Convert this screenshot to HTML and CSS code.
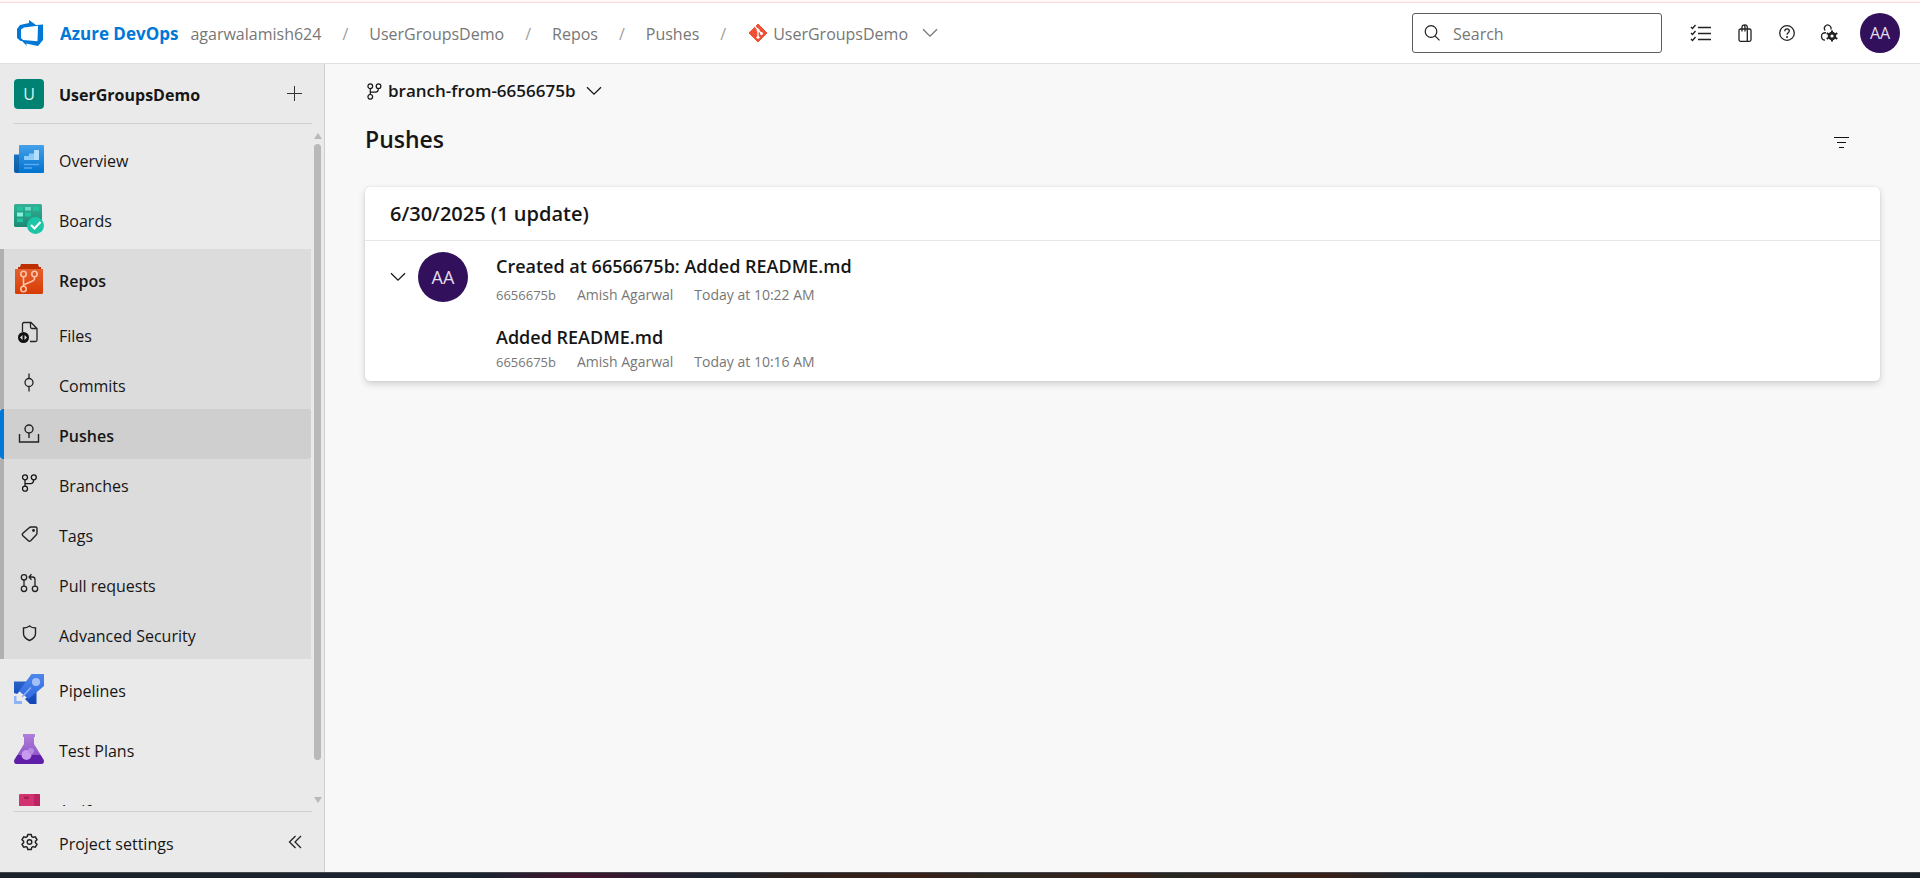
FILE: index.html
```
<!DOCTYPE html>
<html lang="en">
<head>
<meta charset="utf-8">
<title>Pushes - Azure DevOps</title>
<link rel="stylesheet" href="styles.css">
</head>
<body>
<svg class="defs" width="0" height="0" aria-hidden="true">
  <defs>
    <linearGradient id="g-blue" x1="0" y1="0" x2="0" y2="1"><stop offset="0" stop-color="#45a0e8"/><stop offset="1" stop-color="#0072d0"/></linearGradient>
    <linearGradient id="g-navy" x1="0" y1="0" x2="0" y2="1"><stop offset="0" stop-color="#1b72bd"/><stop offset="1" stop-color="#0a5ba3"/></linearGradient>
    <linearGradient id="g-green" x1="0" y1="0" x2="0" y2="1"><stop offset="0" stop-color="#36b096"/><stop offset="1" stop-color="#1b8a74"/></linearGradient>
    <linearGradient id="g-orange" x1="0" y1="0" x2="0" y2="1"><stop offset="0" stop-color="#e4602f"/><stop offset="1" stop-color="#d83b01"/></linearGradient>
    <linearGradient id="g-rocket" x1="0" y1="0" x2="0" y2="1"><stop offset="0" stop-color="#4f86ea"/><stop offset="1" stop-color="#2f69e0"/></linearGradient>
    <linearGradient id="g-rocketdark" x1="0" y1="0" x2="0" y2="1"><stop offset="0" stop-color="#2a62c8"/><stop offset="1" stop-color="#1244b5"/></linearGradient>
    <linearGradient id="g-violet" x1="0" y1="0" x2="0" y2="1"><stop offset="0" stop-color="#b07edb"/><stop offset="1" stop-color="#8449c0"/></linearGradient>
    <symbol id="branch" viewBox="0 0 16 18"><g fill="none" stroke="currentColor" stroke-width="1.3"><circle cx="3.5" cy="3.3" r="2.5"/><circle cx="12.3" cy="3.3" r="2.5"/><circle cx="3.5" cy="14.7" r="2.5"/><path d="M3.5 5.8v6.4M3.5 9.6h5.6c2 0 3-1.400 3-3.800"/></g></symbol>
    <symbol id="chevron" viewBox="0 0 16 10"><path d="M1 1.200l7 7 7-7" fill="none" stroke="currentColor" stroke-width="1.300"/></symbol>
  </defs>
</svg>

<div class="app">
  <header class="topbar">
    <a class="brand" href="#">
      <svg class="brand-logo" viewBox="0 0 26 26" width="26" height="26" aria-hidden="true"><path fill="#0078d7" fill-rule="evenodd" d="M0 9l3-4 9-2V0l7 5 7-.600V20l-5 6-12-2.600 1 2.600-5-5H3.500L0 18zM4 9.500V18l2 2 14.500 1.200L21 5.700 7 7.600z"/></svg>
      <span>Azure DevOps</span>
    </a>
    <nav class="crumbs" aria-label="Breadcrumb">
      <a href="#">agarwalamish624</a><span class="slash">/</span>
      <a href="#">UserGroupsDemo</a><span class="slash">/</span>
      <a href="#">Repos</a><span class="slash">/</span>
      <a href="#">Pushes</a><span class="slash">/</span>
      <button class="repo-picker" type="button">
        <svg viewBox="0 0 18 18" width="18" height="18" aria-hidden="true"><path d="M9 0l9 9-9 9-9-9z" fill="#f05033" stroke="#f05033" stroke-linejoin="round"/><path d="M6 2.500l3 3v8M9 6l3.500 3.500" stroke="#fff" stroke-width="1.300" fill="none"/><circle cx="9" cy="6" r="1.500" fill="#fff"/><circle cx="12.500" cy="9.500" r="1.500" fill="#fff"/><circle cx="9" cy="13.300" r="1.500" fill="#fff"/></svg>
        <span>UserGroupsDemo</span>
        <svg class="chev" width="16" height="10" aria-hidden="true"><use href="#chevron"/></svg>
      </button>
    </nav>
    <label class="search">
      <svg viewBox="0 0 16 16" width="16" height="16" aria-hidden="true"><g fill="none" stroke="#222" stroke-width="1.200"><circle cx="7" cy="6.500" r="5.800"/><path d="M11 10.800l4.500 4.500"/></g></svg>
      <input type="text" placeholder="Search" aria-label="Search">
    </label>
    <div class="tools">
      <button type="button" aria-label="Work items"><svg viewBox="0 0 22 18" width="22" height="18"><path d="M8 3.500h13M8 9.500h13M8 15.500h13M1 3l1.500 1.500L5.500 1M1 9l1.500 1.500L5.500 7M1 15l1.500 1.500L5.500 13" fill="none" stroke="#222" stroke-width="1.400"/></svg></button>
      <button type="button" aria-label="Marketplace"><svg viewBox="0 0 18 18" width="18" height="18"><g fill="none" stroke="#222" stroke-width="1.300"><rect x="3" y="5" width="12" height="12.300" rx="1.500"/><path d="M11.300 5v12M6 7.500V3.500C6 .300 9 .300 9 3.500v4M8 1.200c2-.700 3.300.300 3.300 2.300V5"/></g></svg></button>
      <button type="button" aria-label="Help"><svg viewBox="0 0 18 18" width="18" height="18"><g fill="none" stroke="#222" stroke-width="1.300"><circle cx="9" cy="9" r="7.300"/><path d="M6.800 7.200C6.800 4 11.300 4.200 11.300 7c0 1.700-2.300 1.800-2.300 3.800"/></g><circle cx="9" cy="12.900" r="1" fill="#222"/></svg></button>
      <button type="button" aria-label="User settings"><svg viewBox="0 0 18 18" width="18" height="18"><g fill="none" stroke="#222" stroke-width="1.300"><path d="M5.200 6.500a3.300 3.300 0 1 1 5.600-1M6 8.800c-2.800-.300-4.500 1-4.500 3.200 0 2.300 1.500 4 3.500 4.200"/></g><circle cx="12" cy="12" r="2.900" fill="none" stroke="#222" stroke-width="2.600"/><path d="M12 6.500v2.500M12 15v2.500M6.700 9.200l2.300 1.300M15 13.500l2.300 1.300M6.700 14.800L9 13.500M15 10.500l2.300-1.300" stroke="#222" stroke-width="2"/></svg></button>
    </div>
    <button class="avatar" type="button" aria-label="Account">AA</button>
  </header>

  <div class="body">
    <aside class="sidebar">
      <div class="project">
        <span class="tile">U</span>
        <a class="project-name" href="#">UserGroupsDemo</a>
        <button class="side-btn" type="button" aria-label="Add"><svg viewBox="0 0 16 16" width="16" height="16"><path d="M8.500 0v15M1 7.500h15" stroke="#333" stroke-width="1"/></svg></button>
      </div>
      <div class="nav-wrap">
        <nav class="nav" aria-label="Project">
          <a class="item" href="#"><svg class="hub" viewBox="0 0 30 30" width="30" height="30"><path d="M0 10.500h6V29H2q-2 0-2-2z" fill="url(#g-navy)"/><path d="M5 2q0-1 1-1h23q1 0 1 1v26q0 1-1 1H3q2 0 2-2z" fill="url(#g-blue)"/><path d="M10 16v-4h5v-2.500h5V6h5v10z" fill="#8ccafc"/><path d="M20 6h5v10h-5z" fill="#b5defd"/><path d="M10 20.500h15M10 24h8" stroke="#57aaf0" stroke-width="1.500"/></svg><span>Overview</span></a>
          <a class="item" href="#"><svg class="hub" viewBox="0 0 30 30" width="30" height="30"><rect width="28" height="23" rx="1.500" fill="url(#g-green)"/><path d="M3 3h6v3.500H3zM19 3h6v3.500h-6zM11 8.500h6v4h-6zM3 14.500h6V18H3z" fill="#1fc3a0"/><path d="M11 3h6v3.500h-6z" fill="#68dcc5"/><path d="M3 8.500h6v4H3z" fill="#84f3dd"/><circle cx="21.500" cy="21.500" r="8.500" fill="#1bc5a6"/><path d="M17 21l3.500 3.500 6-6.500" fill="none" stroke="#fff" stroke-width="2.200"/></svg><span>Boards</span></a>
          <div class="group">
            <a class="item strong" href="#"><svg class="hub" viewBox="0 0 30 30" width="30" height="30"><path d="M4 6V3h2l1-3h17l1 3h2v3z" fill="#bd2f00"/><path d="M1 5h28v23.500q0 1.500-1.500 1.500h-25Q1 30 1 28.500z" fill="url(#g-orange)"/><g fill="none" stroke="#ffc3ab" stroke-width="1.600"><circle cx="9.500" cy="10" r="2.700"/><circle cx="20.500" cy="10" r="2.700"/><circle cx="9.500" cy="25" r="2.700"/><path d="M9.500 13v9.300M9.500 21l9.500-4.300q1.500-.700 1.500-2v-2"/></g></svg><span>Repos</span></a>
            <a class="item sub" href="#"><svg class="hub" viewBox="0 0 30 30" width="30" height="30"><path d="M8.500 13V5q0-1.500 1.500-1.500h7l6 6V21q0 1.500-1.500 1.500H16M16.500 3.500V8q0 1.500 1.500 1.500h5" fill="none" stroke="#222" stroke-width="1.300"/><circle cx="9.500" cy="18.500" r="5.500" fill="#111"/><path d="M8.500 16l-2.500 2.500L8.500 21zM10.500 16l2.500 2.500-2.500 2.500z" fill="#ddd"/></svg><span>Files</span></a>
            <a class="item sub" href="#"><svg class="hub" viewBox="0 0 30 30" width="30" height="30"><g fill="none" stroke="#222" stroke-width="1.300"><circle cx="15" cy="13.500" r="4"/><path d="M15 4.500v5M15 17.500v5"/></g></svg><span>Commits</span></a>
            <a class="item sub strong current" href="#" aria-current="page"><svg class="hub" viewBox="0 0 30 30" width="30" height="30"><g fill="none" stroke="#222" stroke-width="1.400"><circle cx="15" cy="10" r="4"/><path d="M15 14v5M5.500 15v8h19v-8"/></g></svg><span>Pushes</span></a>
            <a class="item sub" href="#"><svg class="hub" viewBox="0 0 30 30" width="30" height="30"><use href="#branch" x="7.500" y="5" width="16" height="18"/></svg><span>Branches</span></a>
            <a class="item sub" href="#"><svg class="hub" viewBox="0 0 30 30" width="30" height="30"><path d="M17 8h4.500q1.500 0 1.500 1.500V14q0 1-.700 1.700l-5.600 6q-1.200 1.100-2.300 0l-5.500-5q-1.200-1.200 0-2.400l6.300-5.600q.700-.700 1.800-.700z" fill="none" stroke="#222" stroke-width="1.400"/><circle cx="19.500" cy="11.500" r="1.400" fill="#222"/></svg><span>Tags</span></a>
            <a class="item sub" href="#"><svg class="hub" viewBox="0 0 30 30" width="30" height="30"><g fill="none" stroke="#222" stroke-width="1.300"><circle cx="10" cy="8.300" r="2.700"/><circle cx="10" cy="19.800" r="2.700"/><circle cx="21" cy="19.800" r="2.700"/><path d="M10 11v6.100M21 17.100v-6.800Q21 8 18.500 8H15M17.500 5.300L15 8l2.500 2.700"/></g></svg><span>Pull requests</span></a>
            <a class="item sub" href="#"><svg class="hub" viewBox="0 0 30 30" width="30" height="30"><path d="M15.500 7q2.500 2 6 2v5.500q0 4.500-6 7-6-2.500-6-7V9q3.500 0 6-2z" fill="none" stroke="#222" stroke-width="1.400"/></svg><span>Advanced Security</span></a>
          </div>
          <a class="item" href="#"><svg class="hub" viewBox="0 0 30 30" width="30" height="30"><path d="M0 7.500h13L5 18l-2 2-3-1zM22.500 16v14H16l-5-5z" fill="url(#g-rocketdark)"/><path d="M17.500 0H30v12L14.500 25 5 17z" fill="url(#g-rocket)"/><circle cx="22" cy="8" r="4" fill="#a4c1f7"/><path d="M8 23l9-9.500" stroke="#8fb2f5" stroke-width="1.600"/><path d="M0 22h2.500v5H8v3H0z" fill="#8db4f4"/></svg><span>Pipelines</span></a>
          <a class="item" href="#"><svg class="hub" viewBox="0 0 30 30" width="30" height="30"><path d="M9 0h12v3h-1v7l9.500 15.500Q31 30 27 30H3Q-1 30 .5 25.500L10 10V3H9z" fill="url(#g-violet)"/><path d="M3.500 21h23l3 5q1 4-2.500 4H3q-3.500 0-2.500-4z" fill="#5f1fa8"/><circle cx="12.500" cy="21" r="5" fill="#c79aee"/><circle cx="17" cy="17" r="3" fill="#b88be3"/></svg><span>Test Plans</span></a>
          <a class="item" href="#"><svg class="hub" viewBox="0 0 30 30" width="30" height="30"><path d="M5 1q0-1 1-1h19q1 0 1 1v29H5z" fill="#d0336f"/><path d="M20 0h5q1 0 1 1v29h-6z" fill="#bb2460"/><rect x="10" y="2.500" width="5" height="2.500" rx="1" fill="#a81d52"/></svg><span>Artifacts</span></a>
        </nav>
        <div class="scrollbar" aria-hidden="true"><i class="up"></i><i class="thumb"></i><i class="down"></i></div>
      </div>
      <div class="side-foot">
        <a class="item" href="#"><svg class="hub" viewBox="0 0 30 30" width="30" height="30"><path d="M13.800 7.500h3.400l.6 2.200 1.300.700 2.200-.6 1.700 2.900-1.600 1.600v1.400l1.600 1.600-1.700 2.900-2.200-.6-1.300.7-.6 2.200h-3.400l-.6-2.200-1.300-.7-2.200.6L8 17.300l1.600-1.600v-1.400L8 12.700l1.700-2.900 2.200.6 1.300-.7z" fill="none" stroke="#222" stroke-width="1.500" stroke-linejoin="round"/><circle cx="15.500" cy="15" r="2.300" fill="none" stroke="#222" stroke-width="1.400"/></svg><span>Project settings</span></a>
        <button class="side-btn" type="button" aria-label="Collapse"><svg viewBox="0 0 14 14" width="14" height="14"><path d="M7.500 1L1.500 7l6 6M13 1L7 7l6 6" fill="none" stroke="#222" stroke-width="1.300"/></svg></button>
      </div>
    </aside>

    <main class="main">
      <button class="branch-picker" type="button">
        <svg width="15" height="17" aria-hidden="true"><use href="#branch"/></svg>
        <span>branch-from-6656675b</span>
        <svg class="chev" width="16" height="10" aria-hidden="true"><use href="#chevron"/></svg>
      </button>
      <div class="title-row">
        <h1>Pushes</h1>
        <button class="filter" type="button" aria-label="Filter"><svg viewBox="0 0 16 12" width="16" height="12"><path d="M0 .500h15M3 5.500h9M5 10.500h5" stroke="#111" stroke-width="1"/></svg></button>
      </div>
      <section class="card">
        <h2>6/30/2025 (1 update)</h2>
        <div class="push">
          <button class="expand" type="button" aria-label="Collapse push"><svg width="16" height="10"><use href="#chevron"/></svg></button>
          <span class="avatar large">AA</span>
          <div class="entries">
            <article class="entry">
              <a class="entry-title" href="#">Created at 6656675b: Added README.md</a>
              <p class="meta"><span class="hash">6656675b</span><span>Amish Agarwal</span><span>Today at 10:22 AM</span></p>
            </article>
            <article class="entry nested">
              <a class="entry-title" href="#">Added README.md</a>
              <p class="meta"><span class="hash">6656675b</span><span>Amish Agarwal</span><span>Today at 10:16 AM</span></p>
            </article>
          </div>
        </div>
      </section>
    </main>
  </div>
  <div class="taskbar"></div>
</div>
</body>
</html>
```

FILE: styles.css
```
* { box-sizing: border-box; }
body { margin: 0; font-family: "Open Sans", "Noto Sans", sans-serif; font-size: 16px; line-height: 24px; color: #161616; }
a { color: inherit; text-decoration: none; }
button { font: inherit; color: inherit; background: none; border: 0; padding: 0; display: flex; align-items: center; }
h1, h2, p { margin: 0; }
svg { display: block; flex: none; }
.defs { position: absolute; }

.app { height: 100vh; display: flex; flex-direction: column; overflow: hidden; padding-top: 2px; background: #fff8f6; }

.topbar { flex: none; height: 62px; display: flex; align-items: center; padding: 0 20px 0 17px; background: #fff; border-top: 1px solid #f8dadd; border-bottom: 1px solid #e1e1e1; }
.brand { display: flex; align-items: center; gap: 17px; color: #0078d7; font-weight: 700; font-size: 17px; white-space: nowrap; }
.brand span { padding-top: 2px; }
.crumbs { display: flex; align-items: center; gap: 21px; margin-left: 12px; color: #777; white-space: nowrap; }
.crumbs a, .crumbs span { padding-top: 2px; }
.slash { color: #a0a0a0; }
.repo-picker { gap: 6px; margin-left: 2px; }
.chev { margin-left: 8px; }
.search { margin-left: auto; width: 250px; height: 40px; display: flex; align-items: center; gap: 13px; padding: 0 11px; border: 1px solid #5c5c5c; border-radius: 3px; }
.search input { flex: 1; min-width: 0; border: 0; padding: 2px 0 0; outline: 0; background: none; font: inherit; }
.search input::placeholder { color: #777; opacity: 1; }
.tools { display: flex; gap: 24px; margin: 0 22px 0 28px; }
.avatar { flex: none; display: flex; align-items: center; justify-content: center; width: 40px; height: 40px; border-radius: 50%; background: #32105c; color: #e4dcec; }
.avatar.large { width: 50px; height: 50px; font-size: 18px; margin-left: 12px; }

.body { flex: 1; min-height: 0; display: flex; }
.sidebar { flex: none; width: 325px; display: flex; flex-direction: column; background: #eaeaea; border-right: 1px solid #cfcfcf; }
.project { display: flex; align-items: center; height: 60px; margin: 0 12px 0 13px; border-bottom: 1px solid #d0d0d0; }
.tile { width: 30px; height: 30px; margin-left: 1px; border-radius: 4px; background: #008272; color: #dff3f0; text-align: center; line-height: 30px; }
.project-name { margin-left: 15px; padding-top: 2px; font-weight: 700; }
.side-btn { margin-left: auto; margin-right: 10px; }
.nav-wrap { flex: 1; min-height: 0; display: flex; overflow: hidden; padding-top: 5px; }
.nav { width: 311px; overflow: hidden; }
.item { display: flex; align-items: center; gap: 15px; height: 60px; padding-left: 14px; white-space: nowrap; }
.item span { padding-top: 3px; }
.strong { font-weight: 600; }
.group { background: #dcdcdc; }
.group .item { border-left: 4px solid #b0b0b0; padding-left: 10px; }
.group .sub { height: 50px; }
.group .current { background: #cfcfcf; border-left-color: #0078d7; border-radius: 3px; }
.scrollbar { flex: 1; display: flex; flex-direction: column; align-items: center; padding: 4px 0 3px; }
.up, .down { border: 4px solid transparent; }
.up { border-top: 0; border-bottom: 6px solid #b9b9b9; }
.down { border-bottom: 0; border-top: 6px solid #b9b9b9; margin-top: auto; }
.thumb { width: 7px; height: 92%; min-height: 0; margin-top: 5px; border-radius: 4px; background: #b9b9b9; }
.side-foot { display: flex; align-items: center; height: 61px; margin: 5px 12px 0 13px; border-top: 1px solid #d0d0d0; }
.side-foot .item { padding-left: 1px; }

.main { flex: 1; min-width: 0; padding: 15px 40px 0; background: #f8f8f8; }
.branch-picker { gap: 6px; font-weight: 600; font-size: 17px; padding-left: 2px; }
.branch-picker .chev { margin-left: 5px; }
.title-row { display: flex; align-items: center; justify-content: space-between; padding: 20px 30px 0 0; }
h1 { font-size: 23px; line-height: 32px; font-weight: 600; }
.filter { margin-top: 8px; }
.card { margin-top: 32px; padding-bottom: 9px; background: #fff; border-radius: 5px; box-shadow: 0 3px 7px rgba(0, 0, 0, .16), 0 0 2px rgba(0, 0, 0, .1); }
h2 { padding: 14px 25px; height: 54px; font-size: 20px; line-height: 26px; font-weight: 600; border-bottom: 1px solid #e6e6e6; }
.push { display: flex; align-items: flex-start; padding: 11px 25px 0; }
.expand { height: 50px; }
.entries { margin-left: 28px; }
.entry { padding-top: 2px; }
.entry-title { display: block; font-weight: 600; font-size: 18px; line-height: 24px; }
.meta { display: flex; align-items: center; gap: 21px; margin-top: 7px; color: #777; font-size: 14px; line-height: 20px; }
.hash { font-size: 13px; }
.nested { padding-top: 20px; }
.nested .meta { margin-top: 3px; }

.taskbar { flex: none; height: 6px; border-top: 1px solid #44464c; background: linear-gradient(90deg, #1c212b 0%, #1a242f 25%, #42142f 30%, #1c2431 37%, #30201a 42%, #382018 48%, #2a2820 52%, #3a2018 59%, #262822 61%, #3a1f16 69%, #1a2733 74%, #1a212b 100%); }
```
